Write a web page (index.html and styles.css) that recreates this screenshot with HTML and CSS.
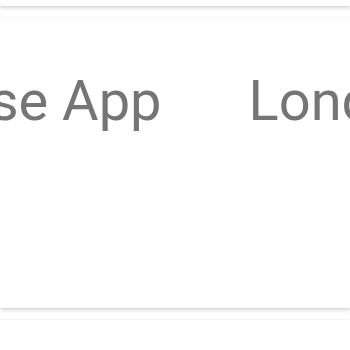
FILE: index.html
```html
<!DOCTYPE html>
<html>
<head>
<meta charset="utf-8">
<link rel="stylesheet" href="styles.css">
</head>
<body>
<div class="list">
  <div class="card"></div>
  <div class="card">
    <div class="row">
      <span class="item first">Firebase App</span>
      <span class="item">London</span>
    </div>
  </div>
  <div class="card"></div>
</div>
</body>
</html>
```
FILE: styles.css
```css
html, body {
  margin: 0;
  padding: 0;
  background: #fff;
  height: 350px;
  overflow: hidden;
}
.list {
  display: flex;
  flex-direction: column;
  gap: 12px;
  margin-top: -284px;
}
.card {
  height: 290px;
  flex: none;
  background: #fff;
  overflow: hidden;
  box-shadow: 0 2px 4px 0 rgba(0,0,0,.16), 0 0 2px 0 rgba(0,0,0,.08);
}
.row {
  display: flex;
  gap: 87px;
  padding-top: 50px;
  white-space: nowrap;
}
.item {
  flex: none;
  font-family: Roboto, "Liberation Sans", sans-serif;
  font-size: 56px;
  color: #757575;
}
.first {
  margin-left: -165px;
}
```
